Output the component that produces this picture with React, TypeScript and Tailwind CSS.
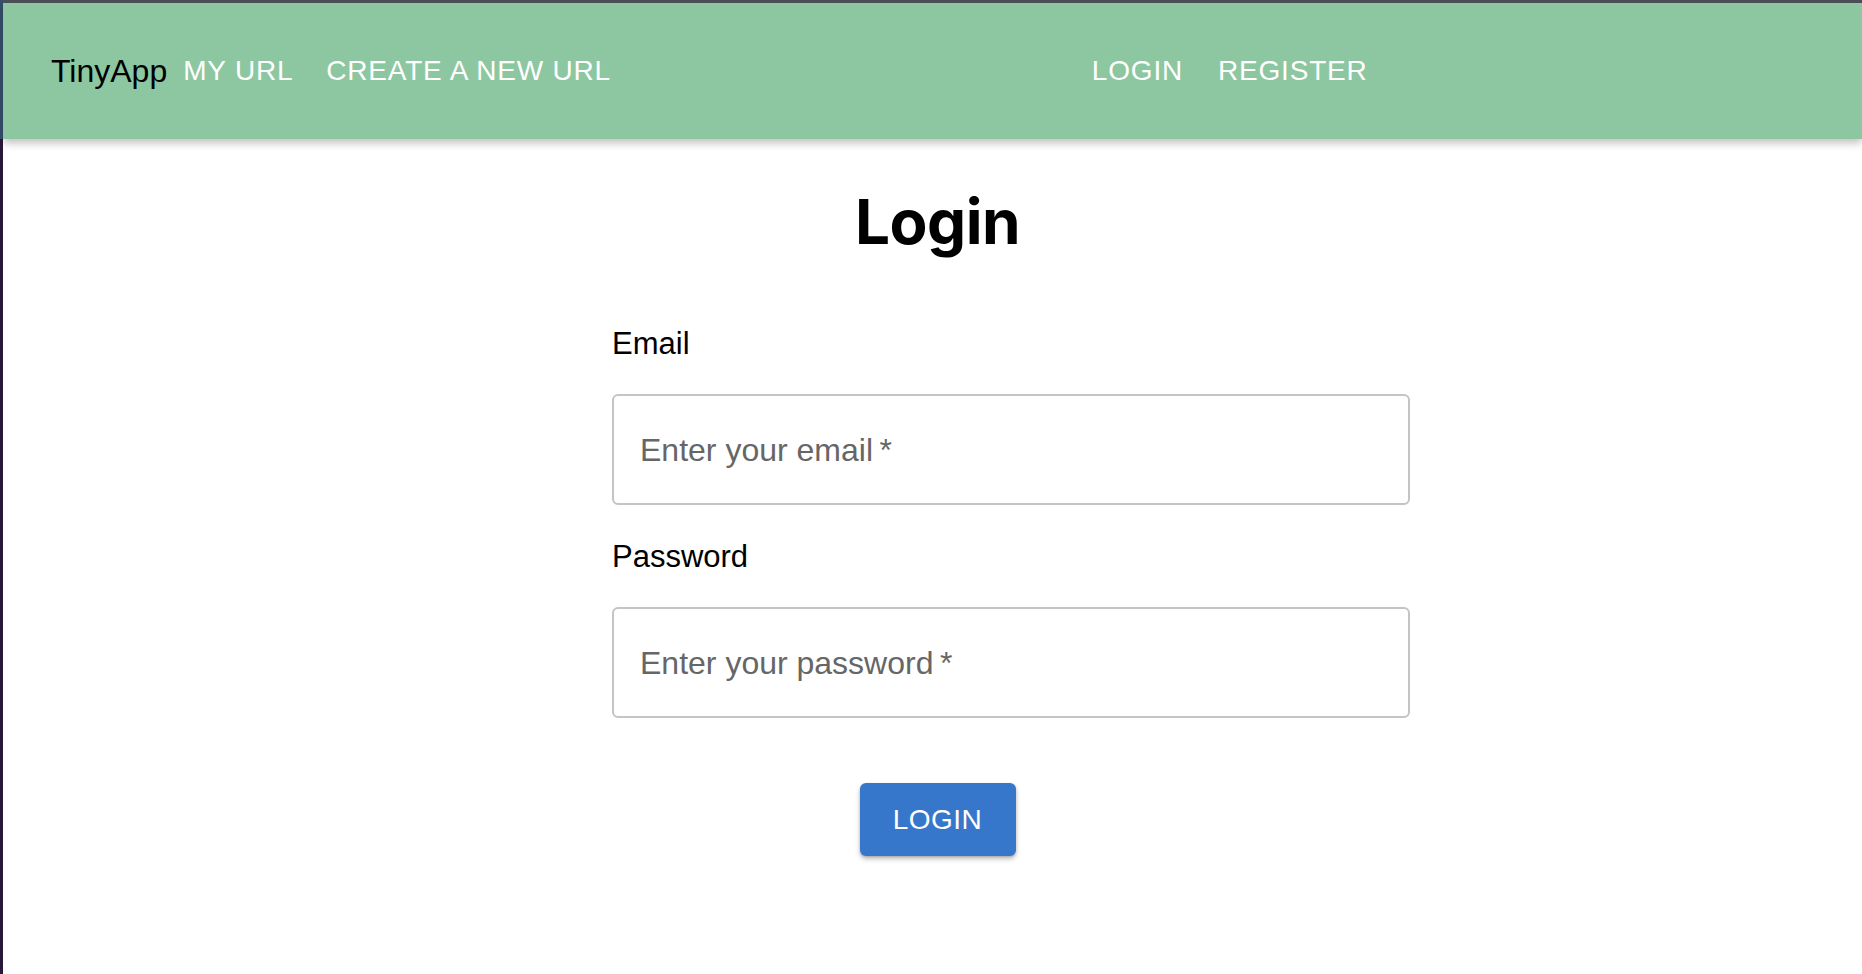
import React from 'react';

const navLinks = ['MY URL', 'CREATE A NEW URL'];
const authLinks = ['LOGIN', 'REGISTER'];

function Field({ label, placeholder, type }: { label: string; placeholder: string; type: string }) {
  return (
    <div className="flex flex-col">
      <label className="text-[31px] leading-[36px] text-black">{label}</label>
      <div className="mt-[32px] h-[111px] w-[798px] rounded-[6px] border-2 border-[#c4c4c4] flex items-center px-[26px]">
        <input
          type={type}
          placeholder={`${placeholder}\u2009*`}
          className="w-full bg-transparent text-[32px] text-black placeholder:text-[#666666] outline-none"
        />
      </div>
    </div>
  );
}

export default function App() {
  return (
    <div
      className="min-h-[974px] w-full bg-white flex"
      style={{ fontFamily: '"Liberation Sans", Arial, sans-serif' }}
    >
      {/* window edge */}
      <div className="w-[3px] flex flex-col shrink-0">
        <div className="h-[139px] bg-[#35506e]" />
        <div className="flex-1 bg-[#2a1838]" />
      </div>

      <div className="flex-1 flex flex-col">
        {/* App bar */}
        <header className="h-[139px] bg-[#8cc7a1] border-t-[3px] border-[#4b4f55] shadow-[0_4px_8px_rgba(0,0,0,0.25)] flex items-center relative z-10">
          <span className="ml-[48px] text-[32px] text-black">TinyApp</span>
          <nav className="flex items-center ml-[16px] gap-[33px]">
            {navLinks.map((link) => (
              <a key={link} className="text-[28px] tracking-[0.8px] text-white">
                {link}
              </a>
            ))}
          </nav>
          <nav className="flex items-center ml-[481px] gap-[35px]">
            {authLinks.map((link) => (
              <a key={link} className="text-[28px] tracking-[0.8px] text-white">
                {link}
              </a>
            ))}
          </nav>
        </header>

        {/* Login form */}
        <main className="flex flex-col">
          <h1
            className="self-center ml-[10px] mt-[45px] text-[62px] leading-[76px] font-bold text-black tracking-[-0.5px]"
            style={{ fontFamily: 'Inter, "Liberation Sans", sans-serif' }}
          >
            Login
          </h1>
          <form className="ml-[609px] mt-[66px] flex flex-col gap-[34px]">
            <Field label="Email" placeholder="Enter your email" type="email" />
            <Field label="Password" placeholder="Enter your password" type="password" />
          </form>
          <button className="self-center ml-[10px] mt-[65px] w-[156px] h-[73px] rounded-[6px] bg-[#3677cb] text-white text-[28px] tracking-[0.5px] shadow-[0_3px_5px_rgba(0,0,0,0.25),0_1px_2px_rgba(0,0,0,0.15)]">
            LOGIN
          </button>
        </main>
      </div>
    </div>
  );
}
